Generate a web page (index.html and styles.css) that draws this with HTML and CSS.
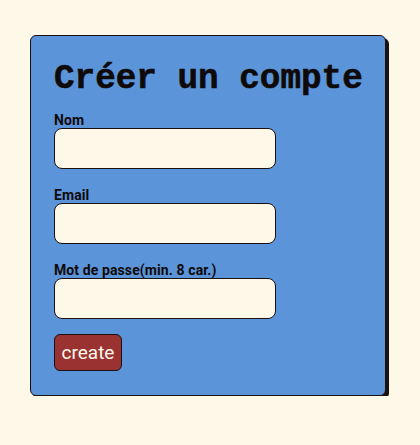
FILE: index.html
```html
<!DOCTYPE html>
<html lang="fr">
<head>
<meta charset="utf-8">
<title>Créer un compte</title>
<link rel="stylesheet" href="styles.css">
</head>
<body>
<form class="card">
  <h1 class="title">Créer un compte</h1>
  <label class="label" for="nom">Nom</label>
  <input class="field" id="nom" type="text">
  <label class="label" for="email">Email</label>
  <input class="field" id="email" type="email">
  <label class="label" for="pw">Mot de passe(min. 8 car.)</label>
  <input class="field" id="pw" type="password">
  <button class="btn" type="button">create</button>
</form>
</body>
</html>
```
FILE: styles.css
```css
html, body {
  margin: 0;
  padding: 0;
  background: #fef8e9;
}
body {
  padding: 35px 0 0 30px;
  font-family: "Liberation Sans Narrow", Roboto, sans-serif;
}
.card {
  width: 356px;
  height: 361px;
  box-sizing: border-box;
  background: #5b94d8;
  border: 1px solid #1a1010;
  border-radius: 6px;
  box-shadow: 3px 3px 0 #1a1010;
  padding: 23px 16px 0 23px;
  display: flex;
  flex-direction: column;
  align-items: flex-start;
}
.title {
  margin: 0 0 14px;
  font-family: "Liberation Mono", monospace;
  font-size: 34.3px;
  line-height: 40px;
  font-weight: bold;
  color: #0f0a0a;
  white-space: nowrap;
  -webkit-text-stroke: 0.6px #0f0a0a;
}
.label {
  display: block;
  font-size: 14px;
  line-height: 15px;
  font-weight: bold;
  color: #0f0a0a;
  letter-spacing: 0.1px;
}
.field {
  display: block;
  width: 222px;
  height: 41px;
  box-sizing: border-box;
  margin: 0 0 19px;
  background: #fef8e9;
  border: 1.5px solid #1a1010;
  border-radius: 8px;
}
.field:last-of-type {
  margin-bottom: 15px;
}
.btn {
  width: 68px;
  height: 37px;
  box-sizing: border-box;
  background: #9a3232;
  color: #fef8e9;
  border: 1.5px solid #1a1010;
  border-radius: 6px;
  font-family: "Liberation Sans Narrow", Roboto, sans-serif;
  font-size: 19px;
  padding: 0;
}
```
